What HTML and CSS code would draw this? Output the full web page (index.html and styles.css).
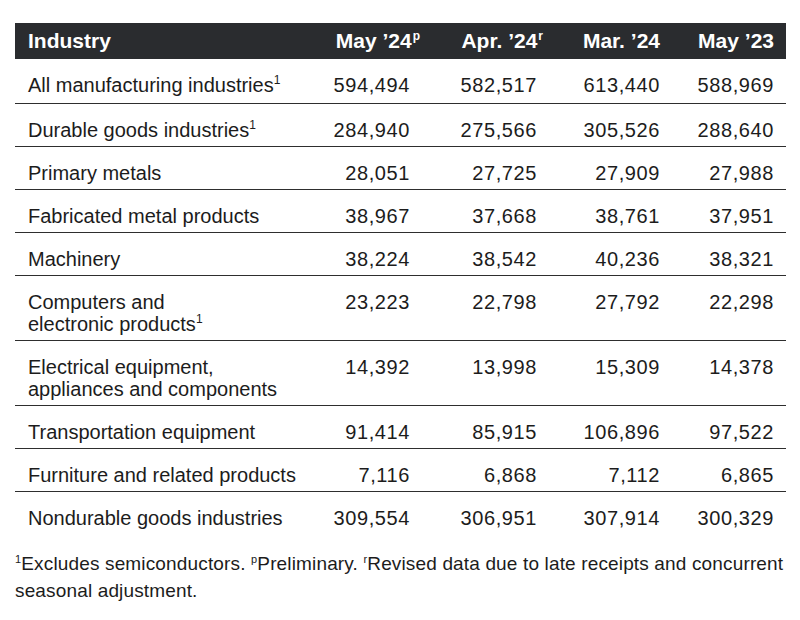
FILE: index.html
```html
<!DOCTYPE html>
<html>
<head>
<meta charset="utf-8">
<link rel="stylesheet" href="styles.css">
</head>
<body>
<div class="wrap">
<table class="data">
<colgroup>
<col class="c-name"><col class="c-num1"><col class="c-num2"><col class="c-num3"><col class="c-num4">
</colgroup>
<thead>
<tr>
<th class="name">Industry</th>
<th class="num">May ’24<sup class="hsup hsup-p">p</sup></th>
<th class="num">Apr. ’24<sup class="hsup hsup-r">r</sup></th>
<th class="num">Mar. ’24</th>
<th class="num">May ’23</th>
</tr>
</thead>
<tbody>
<tr class="first"><td class="name">All manufacturing industries<sup class="fn">1</sup></td><td class="num">594,494</td><td class="num">582,517</td><td class="num">613,440</td><td class="num">588,969</td></tr>
<tr><td class="name">Durable goods industries<sup class="fn">1</sup></td><td class="num">284,940</td><td class="num">275,566</td><td class="num">305,526</td><td class="num">288,640</td></tr>
<tr><td class="name">Primary metals</td><td class="num">28,051</td><td class="num">27,725</td><td class="num">27,909</td><td class="num">27,988</td></tr>
<tr><td class="name">Fabricated metal products</td><td class="num">38,967</td><td class="num">37,668</td><td class="num">38,761</td><td class="num">37,951</td></tr>
<tr><td class="name">Machinery</td><td class="num">38,224</td><td class="num">38,542</td><td class="num">40,236</td><td class="num">38,321</td></tr>
<tr><td class="name">Computers and<br>electronic products<sup class="fn">1</sup></td><td class="num">23,223</td><td class="num">22,798</td><td class="num">27,792</td><td class="num">22,298</td></tr>
<tr><td class="name">Electrical equipment,<br>appliances and components</td><td class="num">14,392</td><td class="num">13,998</td><td class="num">15,309</td><td class="num">14,378</td></tr>
<tr><td class="name">Transportation equipment</td><td class="num">91,414</td><td class="num">85,915</td><td class="num">106,896</td><td class="num">97,522</td></tr>
<tr><td class="name">Furniture and related products</td><td class="num">7,116</td><td class="num">6,868</td><td class="num">7,112</td><td class="num">6,865</td></tr>
<tr class="last"><td class="name">Nondurable goods industries</td><td class="num">309,554</td><td class="num">306,951</td><td class="num">307,914</td><td class="num">300,329</td></tr>
</tbody>
</table>
<p class="notes"><sup class="fn">1</sup>Excludes semiconductors. <sup class="fn">p</sup>Preliminary. <sup class="fn">r</sup>Revised data due to late receipts and concurrent seasonal adjustment.</p>
</div>
</body>
</html>
```
FILE: styles.css
```css
html, body {
  margin: 0;
  padding: 0;
  background: #ffffff;
}
body {
  font-family: "Liberation Sans", Arial, sans-serif;
  color: #1c1c1c;
}
.wrap {
  padding: 23px 14px 0 15px;
}
.data {
  width: 771px;
  border-collapse: collapse;
  table-layout: fixed;
}
.c-name { width: 295px; }
.c-num1 { width: 112px; }
.c-num2 { width: 127px; }
.c-num3 { width: 123px; }
.c-num4 { width: 114px; }
.data thead th {
  background: #2a2c2f;
  color: #ffffff;
  font-weight: bold;
  font-size: 21px;
  line-height: 24px;
  height: 36px;
  padding: 0 12px 0 13px;
  box-sizing: border-box;
  text-align: left;
  vertical-align: middle;
  white-space: nowrap;
}
.data thead th.num {
  text-align: right;
  padding-left: 0;
}
.hsup {
  font-size: 12px;
  line-height: 0;
  font-weight: bold;
  vertical-align: 0;
  position: relative;
  top: -8px;
}
.hsup-p { margin-right: -10px; margin-left: 1px; }
.hsup-r { margin-right: -6px; margin-left: 1px; }
.data td {
  font-size: 20px;
  line-height: 22px;
  padding: 15px 12px 5px 13px;
  border-bottom: 1.5px solid #2e2e2e;
  vertical-align: top;
  white-space: nowrap;
}
.data td.name {
  padding-right: 0;
}
.data td.num {
  text-align: right;
  padding-left: 0;
  letter-spacing: 0.6px;
}
.data tr.first td {
  padding-bottom: 7px;
}
.data tr.last td {
  border-bottom: none;
}
.fn {
  font-size: 12px;
  line-height: 0;
  vertical-align: 0;
  position: relative;
  top: -8px;
}
.notes {
  margin: 16px 0 0 0;
  font-size: 19px;
  line-height: 27px;
  letter-spacing: 0.15px;
  width: 771px;
}
.notes .fn {
  font-size: 11px;
  top: -7px;
}
```
